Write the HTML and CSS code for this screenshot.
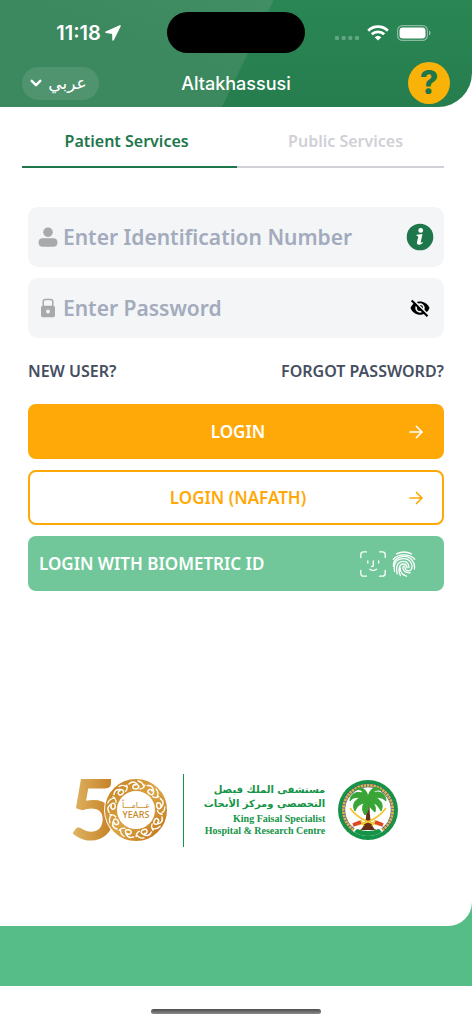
FILE: index.html
```html
<!DOCTYPE html>
<html lang="en">
<head>
    <meta charset="UTF-8">
    <meta name="viewport" content="width=device-width, initial-scale=1.0">
    <title>Altakhassusi</title>
    <link rel="stylesheet" href="styles.css">
</head>
<body>
    <header class="header">
        <div class="status">
            <div class="status-left">
                <span class="time">11:18</span>
                <svg width="16" height="16" viewBox="0 0 16 16"><path d="M15 1 1 7.200l6.900.9.200 6.900z" fill="#fff" stroke="#fff" stroke-width="1.600" stroke-linejoin="round"/></svg>
            </div>
            <div class="island"></div>
            <div class="status-right">
                <svg width="24" height="4" viewBox="0 0 24 4" fill="#fff" opacity=".28"><rect width="4" height="4" rx="1.300"/><rect x="6.700" width="4" height="4" rx="1.300"/><rect x="13.300" width="4" height="4" rx="1.300"/><rect x="20" width="4" height="4" rx="1.300"/></svg>
                <svg width="22" height="16" viewBox="0 0 22 16" fill="none" stroke="#fff" stroke-width="2.800"><path d="M1.200 5.700a14 14 0 0 1 19.600 0M4.800 9.300a8.900 8.900 0 0 1 12.400 0"/><path d="M11 15.600 7.700 12.300a4.800 4.800 0 0 1 6.600 0z" fill="#fff" stroke="none"/></svg>
                <svg width="34" height="16" viewBox="0 0 34 16"><rect x=".6" y=".6" width="29.800" height="14.800" rx="4.800" fill="none" stroke="#fff" stroke-opacity=".45" stroke-width="1.200"/><rect x="2.500" y="2.500" width="26" height="11" rx="3.200" fill="#fff"/><path d="M32 5.500c2 .8 2 4.200 0 5z" fill="#fff" fill-opacity=".5"/></svg>
            </div>
        </div>
        <nav class="nav">
            <button class="lang" type="button">
                <svg width="12" height="8" viewBox="0 0 12 8" fill="none" stroke="#fff" stroke-width="2.400" stroke-linecap="round" stroke-linejoin="round"><path d="M1.700 1.800 6 6.200l4.300-4.400"/></svg>
                <span lang="ar">عربي</span>
            </button>
            <h1>Altakhassusi</h1>
            <button class="help" type="button" aria-label="Help">?</button>
        </nav>
    </header>

    <div class="page">
        <main class="sheet">
            <div class="tabs">
                <button class="tab active" type="button">Patient Services</button>
                <button class="tab" type="button">Public Services</button>
            </div>

            <form class="form">
                <div class="field">
                    <label for="idnumber" aria-label="Identification number">
                        <svg width="20" height="20" viewBox="0 0 20 20" fill="#a9a9a9"><circle cx="10" cy="5.200" r="4.800"/><rect x=".6" y="11.300" width="18.800" height="8.400" rx="4"/></svg>
                    </label>
                    <input type="text" id="idnumber" placeholder="Enter Identification Number">
                    <button class="icon-btn" type="button" aria-label="Information">
                        <svg width="28" height="28" viewBox="0 0 28 28"><circle cx="14" cy="14" r="13.300" fill="#1e774b"/><circle cx="14.700" cy="7.400" r="2.400" fill="#fff"/><path d="M10.600 11.800 16.500 11l-1.800 7.900c-.2 1 .5.900 1.700.1l.4.900c-3.200 2.700-6.500 2.200-5.800-.8l1.200-5.200c.1-.6-.3-.8-1.600-.9z" fill="#fff"/></svg>
                    </button>
                </div>
                <div class="field">
                    <label for="password" aria-label="Password">
                        <svg width="20" height="20" viewBox="0 0 20 20"><path d="M5.200 8V3.600Q5.200 1.400 7.400 1.400h5.200q2.200 0 2.200 2.200V8" fill="none" stroke="#a9a9a9" stroke-width="1.500"/><rect x="3" y="7.700" width="14" height="11.600" rx="1.700" fill="#a9a9a9"/><circle cx="10" cy="13.500" r="1.900" fill="#f3f5f7"/></svg>
                    </label>
                    <input type="password" id="password" placeholder="Enter Password">
                    <button class="icon-btn" type="button" aria-label="Show password">
                        <svg width="28" height="28" viewBox="0 0 28 28"><path d="M4.500 14c3.300-8.800 15.700-8.800 19 0-3.300 9-15.700 9-19 0z" fill="#000"/><circle cx="14" cy="14" r="3.900" fill="none" stroke="#f3f5f7" stroke-width="1.700"/><path d="M7.800 6.400 23 21.600" stroke="#f3f5f7" stroke-width="2"/><path d="M5.700 6.500 21.500 22.300" stroke="#000" stroke-width="2.100"/></svg>
                    </button>
                </div>

                <div class="links">
                    <a href="#">NEW USER?</a>
                    <a href="#">FORGOT PASSWORD?</a>
                </div>

                <button class="btn btn-primary" type="submit">
                    <span>LOGIN</span>
                    <svg width="16" height="16" viewBox="0 0 16 16"><path d="M2 8h12M8.500 2.500 14 8l-5.500 5.500"/></svg>
                </button>
                <button class="btn btn-outline" type="button">
                    <span>LOGIN (NAFATH)</span>
                    <svg width="16" height="16" viewBox="0 0 16 16"><path d="M2 8h12M8.500 2.500 14 8l-5.500 5.500"/></svg>
                </button>
                <button class="btn btn-bio" type="button">
                    <span>LOGIN WITH BIOMETRIC ID</span>
                    <svg width="26" height="26" viewBox="0 0 26 26"><path d="M.8 6.500V3.600Q.8.800 3.600.8h2.900M19.500.8h2.900q2.800 0 2.800 2.800v2.900M25.200 19.500v2.900q0 2.800-2.800 2.800h-2.900M6.500 25.200H3.600q-2.800 0-2.800-2.800v-2.900M7.800 10v2M18.600 10v2M13.300 9.800v4.400q0 1.300-1.300 1.300h-.4M9.800 18.300q3.400 2.500 6.700 0"/></svg>
                    <svg width="24" height="26" viewBox="0 0 24 26"><path d="M4.500 2.900Q12-.9 19.500 2.900M1.300 8.200C6.500 2.400 17.500 2.400 22.700 8.200M1.300 15.200C1.300 4.300 15.500 2.800 20.500 9.800c1.900 2.700 2.400 5.500 1.900 8.200M2.600 20.300C1 11.500 5.500 7.600 11.500 7.600c7.300 0 9.800 6.900 7.800 10.700-1.500 2.600-5.900 2-6.100-1.300-.2-2.600-2.300-2.500-2.300-.3 0 2.900 2.700 5.600 7.300 5M5.200 22.800C3.400 15.500 5.800 10.300 11.400 10.300c4 0 5.700 3.200 5.500 6.300M8.400 24.600C5.600 18.500 7.300 13 11.300 13c2.400 0 3.600 1.700 3.800 3.800M14.500 25.200C10.500 23.800 8 20.400 8.200 16.800"/></svg>
                </button>
            </form>

            <div class="logos">
                <svg class="years" width="102" height="112" viewBox="-4 -20 102 112" role="img" aria-label="50 years">
                    <defs>
                        <linearGradient id="gold" x1="0" y1="0" x2="1" y2="1"><stop offset="0" stop-color="#c88522"/><stop offset=".5" stop-color="#dca544"/><stop offset="1" stop-color="#c47a1e"/></linearGradient>
                        <linearGradient id="gold5" x1="0" y1="0" x2="1" y2="0"><stop offset="0" stop-color="#e2b869"/><stop offset="1" stop-color="#c17a1c"/></linearGradient>
                        <g id="curl" fill="none" stroke="#fff" stroke-linecap="round">
                            <path d="M-7-26q4-4 8 0t-1 5q-4 0-3-3 1-2 3-1" stroke-width="1.500"/>
                            <path d="M2-29q5 1 6 6M4-21q3 0 5-4" stroke-width="1.300"/>
                        </g>
                    </defs>
                    <text class="five" x="-3" y="66" fill="url(#gold5)">5</text>
                    <circle cx="64" cy="36" r="32" fill="#fff"/>
                    <circle cx="64" cy="36" r="25" fill="none" stroke="url(#gold)" stroke-width="12"/>
                    <g transform="translate(64 36)">
                        <use href="#curl"/>
                        <use href="#curl" transform="rotate(40)"/>
                        <use href="#curl" transform="rotate(80)"/>
                        <use href="#curl" transform="rotate(120)"/>
                        <use href="#curl" transform="rotate(160)"/>
                        <use href="#curl" transform="rotate(200)"/>
                        <use href="#curl" transform="rotate(240)"/>
                        <use href="#curl" transform="rotate(280)"/>
                        <use href="#curl" transform="rotate(320)"/>
                    </g>
                    <text class="years-ar" x="64" y="34" text-anchor="middle">عـــامـــاً</text>
                    <text class="years-en" x="64" y="44" text-anchor="middle">YEARS</text>
                </svg>
                <div class="hospital">
                    <div class="hospital-ar" lang="ar" dir="rtl">مستشفى الملك فيصل<br>التخصصي ومركز الأبحاث</div>
                    <div class="hospital-en">King Faisal Specialist<br>Hospital &amp; Research Centre</div>
                </div>
                <svg class="emblem" width="60" height="60" viewBox="0 0 60 60" role="img" aria-label="Emblem">
                    <circle cx="30" cy="30" r="30" fill="#159447"/>
                    <circle cx="30" cy="30" r="26" fill="#fff"/>
                    <path d="M15.500 50a24.700 24.700 0 1 1 29 0" fill="none" stroke="#4d5a73" stroke-width="3.800"/>
                    <path d="M15.500 50a24.700 24.700 0 1 1 29 0" fill="none" stroke="#d6b650" stroke-width="2.800" stroke-dasharray="2.500 .7"/>
                    <path d="M16 52q14 8 28 0l-3-3q-11 4-22 0z" fill="#159447"/>
                    <path d="M28.500 24h3q0 17 3 22 1 3 4 4H22q2-1 3.500-4 3.500-6 3-22z" fill="#653016"/>
                    <path d="M30 17C29 9 22 5 17 10c5-1 7 0 8 3-7-2-13 1-13 8 3-4 7-4 10-3-6 2-8 8-5 13 2-5 5-7 9-8-2 4-2 8 1 12 3-3 4-6 3-11 3 4 4 6 7 8 1-4 0-7-2-9 4 1 6 4 8 8 3-6 0-11-5-13 4-1 7 0 10 3 0-7-6-11-13-8 2-3 4-3 8-3-5-5-11-2-13 7z" fill="#39a536" stroke="#39a536" stroke-width="1" stroke-linejoin="round"/>
                    <path d="M12 28q10 14 31 17M48 28Q38 42 17 45" fill="none" stroke="#f2c733" stroke-width="1.800"/>
                    <path d="m37 42 8 3M23 42l-8 3" stroke="#db4a27" stroke-width="3.500"/>
                    <path d="m34 46 3-6M26 46l-3-6" stroke="#f2c733" stroke-width="1.500"/>
                </svg>
            </div>
        </main>
    </div>

    <footer class="home"><div class="home-bar"></div></footer>
</body>
</html>
```
FILE: styles.css
```css
* {
    padding: 0;
    margin: 0;
    box-sizing: border-box;
}

body {
    display: flex;
    flex-direction: column;
    min-height: 100vh;
    font-family: "Noto Sans", Arial, sans-serif;
    background-color: #fff;
}

svg {
    display: block;
    flex: none;
}

button {
    border: none;
    background: none;
    font-family: inherit;
    cursor: pointer;
}

.header {
    position: relative;
    overflow: hidden;
    padding-top: 12px;
    padding-bottom: 3px;
    color: #fff;
    font-family: Inter, Arial, sans-serif;
    background: linear-gradient(to top, #267d4e, #2a8655);
    border-radius: 0 0 34px 0;
}

/* lighter slanted panel on the left */
.header::before {
    content: "";
    position: absolute;
    inset: 0;
    background: linear-gradient(200deg, #459369, #3c885f 60%);
    clip-path: polygon(0 0, 58% 0, 47% 100%, 0 100%);
}

.status,
.nav {
    position: relative;
    display: grid;
    align-items: center;
}

.status {
    grid-template-columns: 1fr 138px 1fr;
}

.status-left,
.status-right {
    display: flex;
    align-items: center;
    justify-content: center;
}

.status-left {
    gap: 4px;
    padding-left: 10px;
}

.status-right {
    gap: 8px;
    padding-right: 12px;
}

.status-right svg:first-child {
    margin-top: 10px;
}

.time {
    font-size: 20px;
    font-weight: 600;
}

.island {
    height: 41px;
    border-radius: 21px;
    background-color: #000;
}

.nav {
    grid-template-columns: 1fr auto 1fr;
    margin-top: 9px;
    padding: 0 22px;
}

.nav h1 {
    font-size: 18px;
    font-weight: 500;
}

.lang {
    display: flex;
    align-items: center;
    justify-content: center;
    gap: 6px;
    width: 77px;
    height: 33px;
    padding-right: 4px;
    border-radius: 17px;
    color: #fff;
    font-family: "DejaVu Sans", sans-serif;
    font-size: 17px;
    line-height: 24px;
    background-color: rgba(255, 255, 255, 0.1);
}

.help {
    justify-self: end;
    width: 42px;
    height: 42px;
    border-radius: 50%;
    color: #1e774b;
    font-size: 32px;
    font-weight: 800;
    line-height: 42px;
    background-color: #f9b208;
}

.page {
    flex: 1;
    display: flex;
    padding-bottom: 60px;
    background: linear-gradient(#fff 50%, #57bd88 50%);
}

.sheet {
    flex: 1;
    display: flex;
    flex-direction: column;
    padding: 12px 28px 60px;
    border-radius: 0 0 24px 0;
    background-color: #fff;
}

.tabs {
    display: flex;
    margin-left: -6px;
}

.tab {
    width: 49%;
    height: 49px;
    padding: 0 0 4px 10px;
    border-bottom: 2px solid #d0d0d6;
    color: #d0d0d6;
    font-size: 16px;
    font-weight: 600;
}

.tab.active {
    width: 51%;
    padding: 0 6px 4px 0;
    color: #1e774b;
    border-color: #1e774b;
}

.form {
    display: flex;
    flex-direction: column;
    gap: 11px;
    margin-top: 39px;
}

.field {
    display: flex;
    align-items: center;
    height: 60px;
    padding: 0 10px;
    border-radius: 10px;
    background-color: #f3f5f7;
}

.field input {
    flex: 1;
    min-width: 0;
    margin-left: 5px;
    border: none;
    outline: none;
    background: none;
    font-family: inherit;
    font-size: 21px;
    font-weight: 600;
}

.field input::placeholder {
    color: #a3abbd;
}

.links {
    display: flex;
    justify-content: space-between;
    padding: 11px 0;
}

.links a {
    color: #454e60;
    font-size: 16px;
    font-weight: 600;
    line-height: 22px;
    text-decoration: none;
}

.btn {
    display: flex;
    align-items: center;
    height: 55px;
    padding: 0 20px;
    border-radius: 8px;
    color: #fff;
    font-size: 17px;
    font-weight: 600;
}

.btn span {
    flex: 1;
    padding-left: 20px;
}

.btn svg {
    fill: none;
    stroke: currentColor;
    stroke-linecap: round;
    stroke-linejoin: round;
    stroke-width: 1.7;
}

.btn-primary {
    background-color: #ffa909;
}

.btn-outline {
    padding: 0 18px;
    border: 2px solid #ffa909;
    color: #ffa909;
}

.btn-bio {
    gap: 6px;
    padding: 0 28px 0 11px;
    text-align: left;
    background-color: #71c799;
}

.btn-bio span {
    padding-left: 0;
}

.btn-bio svg {
    stroke-width: 1.3;
}

.logos {
    display: flex;
    align-items: center;
    justify-content: center;
    margin-top: auto;
    padding-right: 6px;
}

.hospital {
    display: flex;
    flex-direction: column;
    justify-content: center;
    height: 73px;
    margin-left: 13px;
    padding-left: 20px;
    border-left: 1px solid #159447;
    color: #159447;
    text-align: right;
}

.hospital-ar {
    font-family: "DejaVu Sans", sans-serif;
    font-size: 10px;
    font-weight: bold;
    line-height: 14px;
}

.hospital-en {
    margin-top: 2px;
    font-family: "Liberation Serif", serif;
    font-size: 10px;
    font-weight: bold;
    line-height: 12px;
}

.emblem {
    margin-left: 13px;
}

.five {
    font-family: Lato, sans-serif;
    font-size: 84px;
    font-weight: 700;
}

.years-ar,
.years-en {
    fill: #c88522;
}

.years-ar {
    font-family: "DejaVu Sans", sans-serif;
    font-size: 8px;
}

.years-en {
    font-family: "Noto Sans", sans-serif;
    font-size: 9px;
    font-weight: 500;
}

.home {
    display: flex;
    justify-content: center;
    padding: 23px 0 10px;
}

.home-bar {
    width: 36%;
    height: 5px;
    border-radius: 3px;
    background: linear-gradient(#4c4c4c, #8a8a8a);
}
```
